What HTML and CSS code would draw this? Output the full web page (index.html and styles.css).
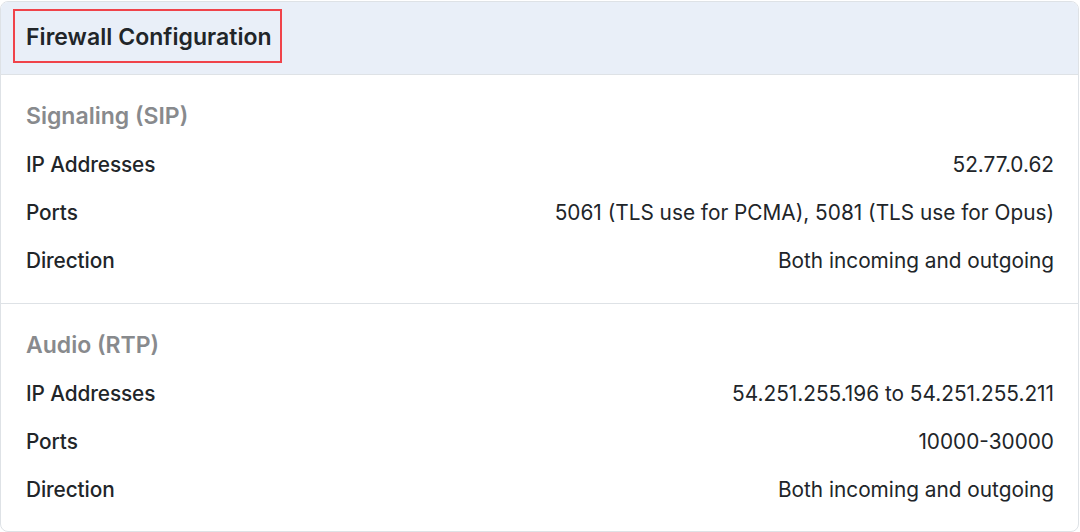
FILE: index.html
```html
<!DOCTYPE html>
<html lang="en">
<head>
<meta charset="utf-8">
<title>Firewall Configuration</title>
<link rel="stylesheet" href="styles.css">
</head>
<body>
<div class="card">
  <div class="card-header">
    <h2 class="card-title">Firewall Configuration</h2>
  </div>
  <section class="group">
    <h3 class="group-title">Signaling (SIP)</h3>
    <div class="row"><span class="label">IP Addresses</span><span class="value">52.77.0.62</span></div>
    <div class="row"><span class="label">Ports</span><span class="value">5061 (TLS use for PCMA), 5081 (TLS use for Opus)</span></div>
    <div class="row"><span class="label">Direction</span><span class="value">Both incoming and outgoing</span></div>
  </section>
  <section class="group">
    <h3 class="group-title">Audio (RTP)</h3>
    <div class="row"><span class="label">IP Addresses</span><span class="value">54.251.255.196 to 54.251.255.211</span></div>
    <div class="row"><span class="label">Ports</span><span class="value">10000-30000</span></div>
    <div class="row"><span class="label">Direction</span><span class="value">Both incoming and outgoing</span></div>
  </section>
</div>
</body>
</html>
```

FILE: styles.css
```css
* { box-sizing: border-box; }
html, body { margin: 0; padding: 0; background: #ffffff; }
body {
  font-family: Inter, "Noto Sans", "Liberation Sans", sans-serif;
  color: #212529;
  padding-top: 1px;
}
.card {
  width: 1079px;
  height: 531px;
  border: 1px solid #dee2e6;
  border-radius: 8px;
  overflow: hidden;
  background: #fff;
}
.card-header {
  height: 73px;
  background: #e9eff8;
  border-bottom: 1px solid #dee2e6;
  padding: 7px 12px;
}
.card-title {
  margin: 0;
  display: inline-block;
  border: 2px solid #f0434a;
  padding: 12px 8px 9px 11px;
  font-size: 23px;
  line-height: 29px;
  font-weight: 600;
  color: #212529;
  letter-spacing: 0.05px;
}
.group {
  padding: 17px 24px 19px 25px;
}
.group + .group {
  border-top: 1px solid #dee2e6;
}
.group-title {
  margin: 0;
  height: 48px;
  display: flex;
  align-items: center;
  font-size: 23px;
  font-weight: 600;
  color: #888a8d;
}
.row {
  height: 48px;
  display: flex;
  align-items: center;
  justify-content: space-between;
  font-size: 20.8px;
}
.label { font-weight: 500; letter-spacing: -0.1px; }
.value { font-weight: 400; }
```
